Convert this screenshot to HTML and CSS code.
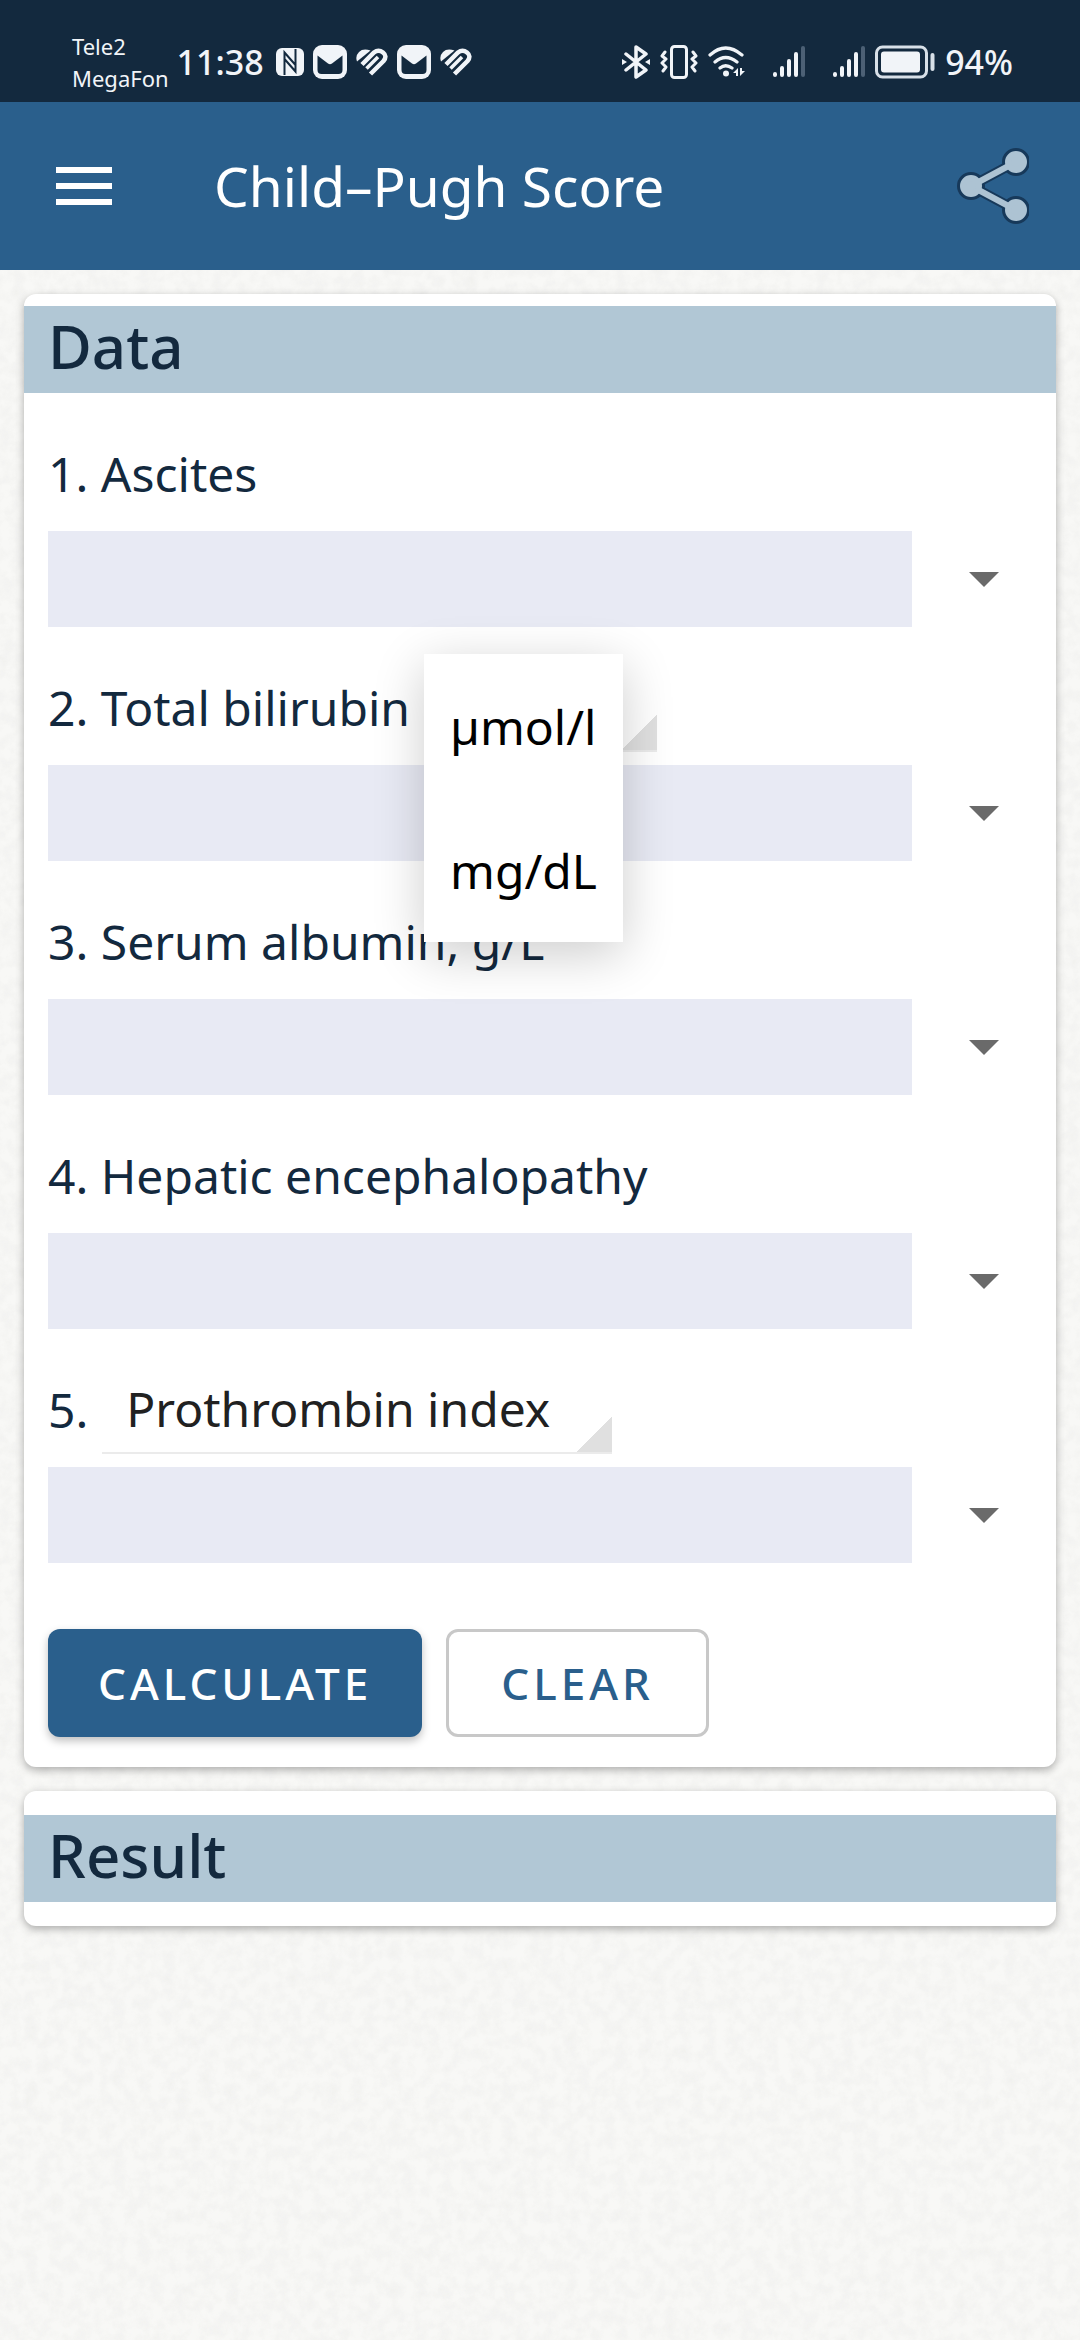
FILE: index.html
```html
<!DOCTYPE html>
<html lang="en">
<head>
  <meta charset="UTF-8" />
  <meta name="viewport" content="width=device-width, initial-scale=1.0"/>
  <title>Child–Pugh Score</title>
  <link rel="stylesheet" href="styles.css">
</head>
<body>
  <!-- Shared icons -->
  <svg class="icon-defs" aria-hidden="true">
    <symbol id="icon-mail" viewBox="0 0 34 34">
      <rect width="34" height="34" rx="9" fill="#f1f4f8"/>
      <path d="M4.500 10.500L15 18.500q2 1.500 4 0L29.500 10.500V25q0 4-4 4H8.500q-4 0-4-4z" fill="#13293e"/>
    </symbol>
    <symbol id="icon-heart" viewBox="0 0 32 28">
      <path d="M1 13.500Q-1 8 3 4T14.500 2.500z" fill="#f1f4f8"/>
      <path d="M6 16.500L18 4.500Q22.500 1 27 4.500T27.500 13L14.500 26" fill="none" stroke="#f1f4f8" stroke-width="4.500"/>
      <path d="M10.500 20.500L22 9" stroke="#f1f4f8" stroke-width="3.500"/>
    </symbol>
    <symbol id="icon-signal" viewBox="0 0 32 34">
      <g stroke="#f1f4f8" stroke-width="4" stroke-linecap="round">
        <path d="M2 29v1M9 23v7M16 16v14M23 9v21"/>
        <path d="M30 3v27" stroke="#4c6075"/>
      </g>
    </symbol>
  </svg>

  <div class="status-bar">
    <div class="carriers">Tele2<br>MegaFon</div>
    <div class="clock">11:38</div>
    <div class="notifications">
      <svg width="28" height="28" viewBox="0 0 28 28">
        <rect width="28" height="28" rx="6" fill="#f1f4f8"/>
        <path d="M8.500 27V4.500L19.500 17V8M19.500 1v22.500L8.500 11v9" fill="none" stroke="#13293e" stroke-width="2"/>
      </svg>
      <svg width="34" height="34"><use href="#icon-mail"/></svg>
      <svg width="32" height="28"><use href="#icon-heart"/></svg>
      <svg width="34" height="34"><use href="#icon-mail"/></svg>
      <svg width="32" height="28"><use href="#icon-heart"/></svg>
    </div>
    <div class="system">
      <!-- bluetooth -->
      <svg width="28" height="34" viewBox="0 0 28 34">
        <path d="M4 9l20 16-10 7V2l10 7L4 25" fill="none" stroke="#f1f4f8" stroke-width="3.500" stroke-linejoin="round" stroke-linecap="round"/>
        <path d="M0 14l5 3-5 3zM28 14l-5 3 5 3z" fill="#f1f4f8"/>
      </svg>
      <!-- vibrate -->
      <svg width="38" height="34" viewBox="0 0 38 34" fill="none" stroke="#f1f4f8" stroke-width="3" stroke-linejoin="round" stroke-linecap="round">
        <rect x="11.500" y="1.500" width="15" height="31" rx="3"/>
        <path d="M5 7l-3 4 4 3-4 4 4 4-3 4M33 7l3 4-4 3 4 4-4 4 3 4"/>
      </svg>
      <!-- wifi -->
      <svg width="37" height="34" viewBox="0 0 37 34">
        <path d="M2 10q15.500-14 32 0M7 17q10.500-9 22 0M12 23q5.500-4.500 12 0" fill="none" stroke="#f1f4f8" stroke-width="3.200" stroke-linecap="round"/>
        <circle cx="18" cy="28.500" r="3" fill="#f1f4f8"/>
        <path d="M25 28l5-5v8h-2v-3zM32 23v8l5-5h-3v-3z" fill="#f1f4f8"/>
      </svg>
      <svg class="signal" width="32" height="34"><use href="#icon-signal"/></svg>
      <svg class="signal" width="32" height="34"><use href="#icon-signal"/></svg>
      <!-- battery -->
      <svg width="60" height="34" viewBox="0 0 60 34">
        <rect x="1.500" y="2" width="50" height="30" rx="6" fill="none" stroke="#d8e0e8" stroke-width="3"/>
        <rect x="6" y="6.500" width="39" height="21" rx="3" fill="#f1f4f8"/>
        <path d="M57.500 10v14" stroke="#d8e0e8" stroke-width="4" stroke-linecap="round"/>
      </svg>
      <span class="battery-level">94%</span>
    </div>
  </div>

  <header class="app-bar">
    <button type="button" class="icon-btn" aria-label="Menu">
      <svg width="56" height="38" viewBox="0 0 56 38"><path d="M0 3h56M0 19h56M0 35h56" stroke="#fff" stroke-width="6"/></svg>
    </button>
    <h1>Child–Pugh Score</h1>
    <button type="button" class="icon-btn" aria-label="Share">
      <svg width="72" height="76" viewBox="0 0 72 76">
        <g stroke="#17395a" stroke-width="10" fill="#17395a">
          <path d="M14 38L59 14M14 38L59 62"/>
          <circle cx="14" cy="38" r="9"/><circle cx="59" cy="14" r="9"/><circle cx="59" cy="62" r="9"/>
        </g>
        <g stroke="#adc3d3" stroke-width="6" fill="#adc3d3">
          <path d="M14 38L59 14M14 38L59 62"/>
          <circle cx="14" cy="38" r="8"/><circle cx="59" cy="14" r="8"/><circle cx="59" cy="62" r="8"/>
        </g>
      </svg>
    </button>
  </header>

  <main>
    <form class="card card-data">
      <h2>Data</h2>

      <div class="field">
        <div class="field-label"><label for="ascites">1. Ascites</label></div>
        <div class="field-input">
          <input type="text" id="ascites" readonly />
          <button type="button" class="arrow" aria-label="Choose ascites"></button>
        </div>
      </div>

      <div class="field">
        <div class="field-label">
          <label for="bilirubin">2. Total bilirubin</label>
          <div class="spinner">
            <select aria-label="Bilirubin unit">
              <option>µmol/l</option>
              <option>mg/dL</option>
            </select>
            <!-- Open unit list -->
            <div class="popup">
              <button type="button">µmol/l</button>
              <button type="button">mg/dL</button>
            </div>
          </div>
        </div>
        <div class="field-input">
          <input type="text" id="bilirubin" readonly />
          <button type="button" class="arrow" aria-label="Choose bilirubin"></button>
        </div>
      </div>

      <div class="field">
        <div class="field-label"><label for="albumin">3. Serum albumin, g/L</label></div>
        <div class="field-input">
          <input type="text" id="albumin" readonly />
          <button type="button" class="arrow" aria-label="Choose albumin"></button>
        </div>
      </div>

      <div class="field">
        <div class="field-label"><label for="encephalopathy">4. Hepatic encephalopathy</label></div>
        <div class="field-input">
          <input type="text" id="encephalopathy" readonly />
          <button type="button" class="arrow" aria-label="Choose encephalopathy"></button>
        </div>
      </div>

      <div class="field">
        <div class="field-label">
          <label for="prothrombin">5.</label>
          <div class="spinner">
            <select aria-label="Coagulation test">
              <option>Prothrombin index</option>
            </select>
          </div>
        </div>
        <div class="field-input">
          <input type="text" id="prothrombin" readonly />
          <button type="button" class="arrow" aria-label="Choose value"></button>
        </div>
      </div>

      <div class="actions">
        <button type="submit" class="btn btn-primary">CALCULATE</button>
        <button type="reset" class="btn">CLEAR</button>
      </div>
    </form>

    <section class="card card-result">
      <h2>Result</h2>
    </section>
  </main>
</body>
</html>
```
FILE: styles.css
```css
:root {
  --dark: #13293e;
  --primary: #2a5f8c;
  --band: #b1c7d5;
  --field: #e8eaf4;
}

* {
  box-sizing: border-box;
}

body {
  margin: 0;
  min-height: 100vh;
  font-family: 'Noto Sans', sans-serif;
  color: var(--dark);
  /* paper grain */
  background: #f8f8f6 url("data:image/svg+xml,%3Csvg xmlns='http://www.w3.org/2000/svg' width='1080' height='1080'%3E%3Cfilter id='p' x='0' y='0' width='100%25' height='100%25'%3E%3CfeTurbulence type='fractalNoise' baseFrequency='.08' numOctaves='4' seed='4' stitchTiles='stitch'/%3E%3CfeColorMatrix values='0 0 0 0 .5 0 0 0 0 .5 0 0 0 0 .48 .2 0 0 0 -.07'/%3E%3C/filter%3E%3Crect width='1080' height='1080' filter='url(%23p)'/%3E%3C/svg%3E");
}

button,
input,
select {
  font-family: inherit;
  color: inherit;
}

.icon-defs {
  display: none;
}

/* Status bar */
.status-bar {
  display: flex;
  align-items: center;
  height: 102px;
  padding: 22px 67px 0 72px;
  background: var(--dark);
  color: #f1f4f8;
}

.carriers {
  font-size: 22px;
  line-height: 32px;
}

.clock,
.battery-level {
  font-size: 34px;
  font-weight: 500;
  line-height: 38px;
}

.clock {
  margin: 0 12px 0 8px;
}

.notifications,
.system {
  display: flex;
  align-items: center;
  gap: 9px;
}

.system {
  gap: 10px;
  margin-left: auto;
}

.signal {
  margin-left: 18px;
}

/* App bar */
.app-bar {
  display: flex;
  align-items: center;
  height: 168px;
  padding: 0 51px 0 56px;
  background: var(--primary);
  color: #fff;
}

.app-bar h1 {
  flex: 1;
  margin: 0 0 0 102px;
  font-size: 55px;
  font-weight: 400;
  line-height: 72px;
}

.icon-btn {
  display: flex;
  padding: 0;
  border: none;
  background: none;
  cursor: pointer;
}

/* Cards */
main {
  display: flex;
  flex-direction: column;
  gap: 24px;
  padding: 24px;
}

.card {
  background: #fff;
  border-radius: 12px;
  box-shadow: 0 3px 8px rgba(0, 0, 0, 0.3);
}

.card-data {
  padding: 12px 0 30px;
}

.card-result {
  padding: 24px 0;
}

.card h2 {
  margin: 0;
  padding: 0 24px 7px;
  font-size: 60px;
  font-weight: 500;
  line-height: 80px;
  background: var(--band);
}

/* Fields */
.field {
  padding: 30px 0 0 24px;
}

.field-label {
  display: flex;
  align-items: center;
  gap: 14px;
  height: 100px;
  margin-bottom: 8px;
  font-size: 48px;
  white-space: nowrap;
}

.field-input {
  display: flex;
}

.field-input input {
  flex: 1;
  min-width: 0;
  height: 96px;
  padding: 0 24px;
  border: none;
  outline: none;
  font-size: 48px;
  background: var(--field);
}

.arrow {
  display: flex;
  align-items: center;
  justify-content: center;
  width: 144px;
  border: none;
  background: none;
  cursor: pointer;
}

.arrow::after {
  content: '';
  border: 15px solid transparent;
  border-top-color: #6a6a6a;
  border-bottom: none;
}

.spinner {
  position: relative;
}

.spinner select {
  appearance: none;
  height: 90px;
  padding: 0 62px 0 24px;
  border: none;
  border-bottom: 2px solid #ebebeb;
  font-size: 48px;
  color: #212121;
  /* corner mark */
  background: linear-gradient(135deg, transparent 50%, #e0e0e0 50%) right bottom / 36px 36px no-repeat;
}

/* Popup list over the unit select */
.popup {
  position: absolute;
  top: -8px;
  left: 0;
  z-index: 10;
  background: #fff;
  box-shadow: 0 12px 48px rgba(0, 0, 0, 0.2);
}

.popup button {
  display: block;
  width: 100%;
  height: 144px;
  padding: 0 26px;
  border: none;
  background: none;
  font-size: 48px;
  text-align: left;
  color: #000;
}

/* Buttons */
.actions {
  display: flex;
  gap: 24px;
  padding: 66px 24px 0;
}

.btn {
  height: 108px;
  padding: 0 52px;
  border: 3px solid #c8c8c8;
  border-radius: 12px;
  background: #fff;
  font-size: 44px;
  font-weight: 500;
  letter-spacing: 4px;
  color: var(--primary);
  cursor: pointer;
}

.btn-primary {
  padding: 0 50px;
  border: none;
  background: var(--primary);
  color: #fff;
  box-shadow: 0 4px 8px rgba(0, 0, 0, 0.25);
}
```
